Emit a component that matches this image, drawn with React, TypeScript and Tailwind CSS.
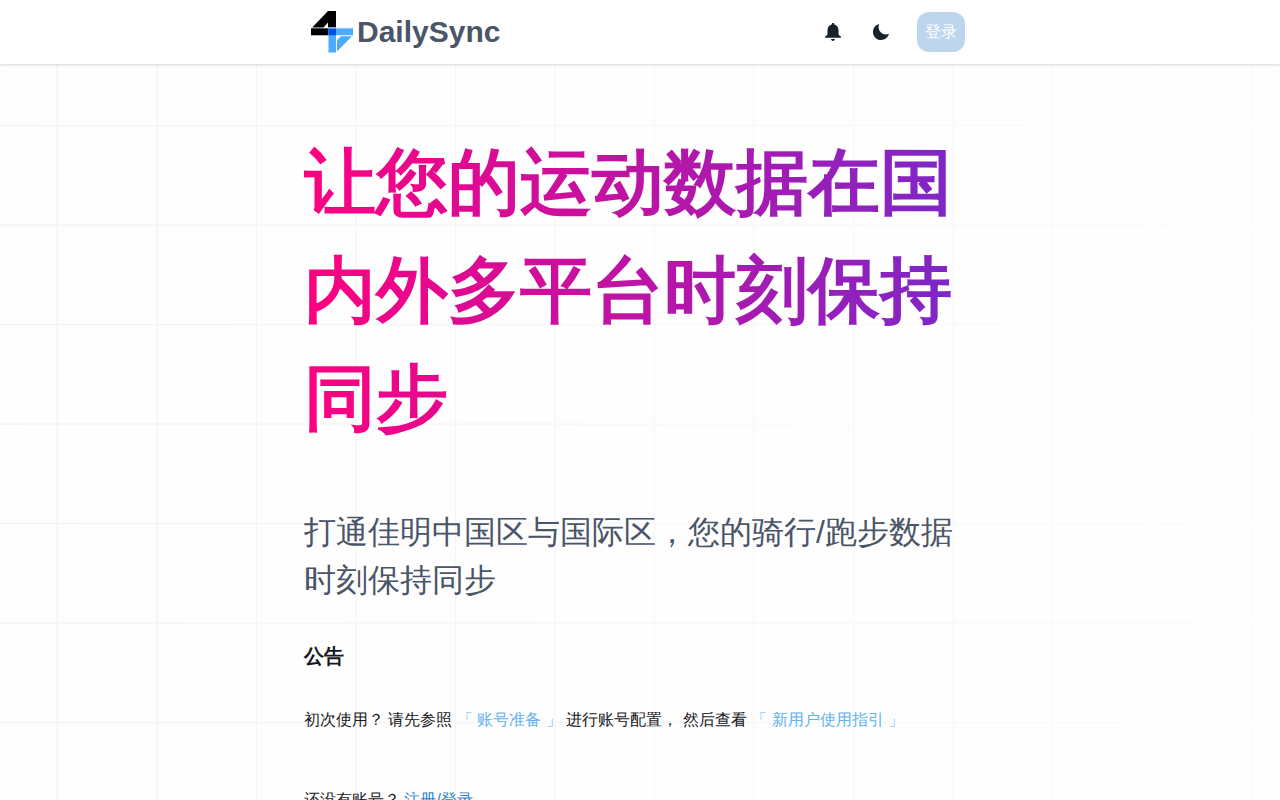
import type { ReactNode } from "react";

const VERTICAL_LINES = [57.3, 156.9, 256.4, 355.9, 455.4, 554.9, 654.4, 753.9, 853.4, 953, 1052.5, 1152, 1251.5];
const HORIZONTAL_LINES = [125.5, 225, 324.5, 424, 523.5, 623, 722.5];

function GridBackground() {
  return (
    <svg className="absolute inset-0 -z-10" width="1280" height="800" viewBox="0 0 1280 800" aria-hidden="true">
      <defs>
        <linearGradient id="grid-fade" gradientUnits="userSpaceOnUse" x1="0" y1="500" x2="1280" y2="420">
          <stop offset="0" stopColor="#f2f2f3" />
          <stop offset="0.5" stopColor="#f7f7f8" />
          <stop offset="1" stopColor="#fbfbfb" />
        </linearGradient>
      </defs>
      <rect width="1280" height="800" fill="#fefefe" />
      <g fill="url(#grid-fade)">
        {VERTICAL_LINES.map((x) => (
          <rect key={x} x={x - 0.6} y={0} width={1.3} height={800} />
        ))}
        {HORIZONTAL_LINES.map((y) => (
          <rect key={y} x={0} y={y - 0.6} width={1280} height={1.3} />
        ))}
      </g>
    </svg>
  );
}

function Logo() {
  return (
    <svg className="h-[42px] w-[42px]" viewBox="0 0 42 42" aria-hidden="true">
      <path d="M17 0h8v16.5H1.2zM12.500 16.500h4.500v-5z" fill="#000" fillRule="evenodd" />
      <path d="M0 17.3h17.5v7H0z" fill="#000" />
      <path d="M17.5 17.3H42v7H25v17.2h-7.5z" fill="#4dabff" />
      <path d="M17.5 17.3H25v7h-7.5z" fill="#0055e0" />
      <path d="M26 40.5V29.2l4-3.9h11z" fill="#4dabff" />
      <path d="M17.5 16.9H42" stroke="#cfe6fb" strokeWidth="0.7" />
    </svg>
  );
}

function BellIcon() {
  return (
    <svg className="h-5 w-5" viewBox="0 0 20 20" fill="currentColor" aria-hidden="true">
      <path d="M10 .9c.8 0 1.300.5 1.300 1.300v.4c2.700.6 4.200 2.800 4.200 5.600v3.500c0 .8.500 1.500 1.700 2.300.5.400.8.800.8 1.300v.4H2v-.4c0-.5.3-.9.8-1.300 1.200-.8 1.700-1.500 1.700-2.300V8.200c0-2.800 1.500-5 4.200-5.600v-.4C8.700 1.400 9.200.9 10 .9zM8 17h4c0 1-.9 1.900-2 1.900S8 18 8 17z" />
    </svg>
  );
}

function MoonIcon() {
  return (
    <svg className="h-5 w-5" viewBox="0 0 512 512" fill="currentColor" aria-hidden="true">
      <path d="M195 125c0-26.300 5.300-51.300 14.900-74.100C118.700 73 51 155.100 51 253c0 114.800 93.200 208 208 208 97.900 0 180-67.700 202.100-158.900-22.800 9.600-47.900 14.900-74.100 14.900-106 0-192-86-192-192z" />
    </svg>
  );
}

function GuideLink({ children }: { children: ReactNode }) {
  return (
    <a href="#" className="text-[#63b3ed]">
      {children}
    </a>
  );
}

export default function App() {
  return (
    <div className="relative isolate h-screen overflow-hidden font-['Liberation_Sans',sans-serif] text-[#171923]">
      <GridBackground />

      <header className="h-16 bg-white shadow-[0_1px_3px_0_rgba(0,0,0,0.1),0_1px_2px_0_rgba(0,0,0,0.06)]">
        <div className="mx-auto flex h-16 w-[672px] items-center justify-between pr-[11px] pl-[7px]">
          <a href="#" className="flex items-center gap-1">
            <Logo />
            <span className="text-3xl font-bold text-[#4a5568]">DailySync</span>
          </a>
          <div className="flex items-center gap-2 text-[#1a202c]">
            <button className="flex h-10 w-10 items-center justify-center" aria-label="通知">
              <BellIcon />
            </button>
            <button className="flex h-10 w-10 items-center justify-center" aria-label="夜间模式">
              <MoonIcon />
            </button>
            <button className="ml-2 h-10 w-12 rounded-xl bg-[#bdd6ee] text-base text-white">登录</button>
          </div>
        </div>
      </header>

      <main className="mx-auto w-[672px] pt-16">
        <h1 className="bg-linear-to-l/srgb from-[#7928ca] to-[#ff0080] bg-clip-text text-7xl leading-[108px] font-bold text-transparent">
          让您的运动数据在国内外多平台时刻保持同步
        </h1>
        <p className="mt-14 text-[32px] leading-[48px] text-[#4a5568]">
          打通佳明中国区与国际区，您的骑行/跑步数据时刻保持同步
        </p>
        <h2 className="mt-[37px] text-xl leading-[30px] font-bold">公告</h2>
        <p className="mt-[37px] leading-6">
          初次使用？ 请先参照 <GuideLink>「 账号准备 」</GuideLink> 进行账号配置， 然后查看{" "}
          <GuideLink>「 新用户使用指引 」</GuideLink>
        </p>
        <p className="mt-14 leading-6">
          还没有账号？{" "}
          <a href="#" className="text-[#3182ce]">
            注册/登录
          </a>
        </p>
      </main>
    </div>
  );
}
